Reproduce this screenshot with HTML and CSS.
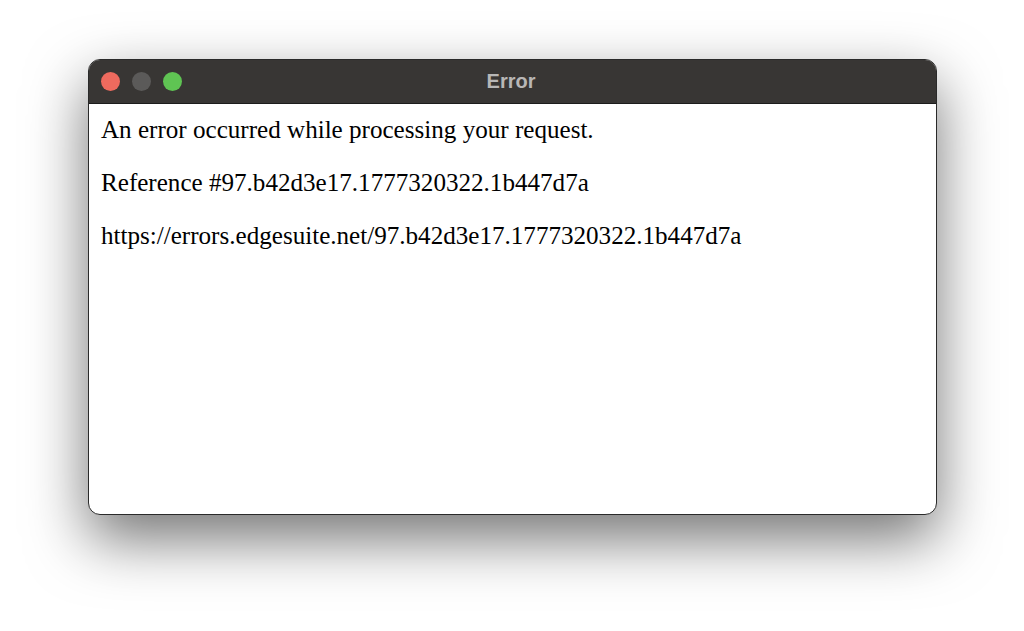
FILE: index.html
```html
<!DOCTYPE html>
<html lang="en">
<head>
    <meta charset="UTF-8">
    <meta name="viewport" content="width=device-width, initial-scale=1.0">
    <title>Error</title>
    <link rel="stylesheet" href="styles.css">
</head>
<body>
    <div class="window">
        <div class="titlebar">
            <div class="lights">
                <span class="light close"></span>
                <span class="light minimize"></span>
                <span class="light zoom"></span>
            </div>
            <div class="title">Error</div>
        </div>
        <div class="content">
            <p>An error occurred while processing your request.</p>
            <p>Reference #97.b42d3e17.1777320322.1b447d7a</p>
            <p>https://errors.edgesuite.net/97.b42d3e17.1777320322.1b447d7a</p>
        </div>
    </div>
</body>
</html>
```

FILE: styles.css
```css
body {
    margin: 0;
    padding: 59px 0 0 88px;
    background-color: #ffffff;
    height: 631px;
    box-sizing: border-box;
    overflow: hidden;
}
.window {
    width: 849px;
    height: 456px;
    box-sizing: border-box;
    border: 1px solid #2a2a2a;
    border-radius: 12px;
    background-color: #ffffff;
    box-shadow: 0 24px 60px rgba(0,0,0,0.55);
    overflow: hidden;
    display: flex;
    flex-direction: column;
}
.titlebar {
    position: relative;
    height: 44px;
    box-sizing: border-box;
    background-color: #383634;
    border-bottom: 1px solid #1c1c1c;
    display: flex;
    align-items: center;
    justify-content: center;
}
.lights {
    position: absolute;
    left: 12px;
    top: 12px;
    display: flex;
    gap: 12px;
}
.light {
    width: 19px;
    height: 19px;
    border-radius: 50%;
}
.close {
    background-color: #ee6a5e;
}
.minimize {
    background-color: #5b5a59;
}
.zoom {
    background-color: #5fc453;
}
.title {
    font-family: "Liberation Sans", Arial, sans-serif;
    font-weight: bold;
    font-size: 20px;
    color: #b8b7b6;
    margin-right: 3px;
}
.content {
    padding: 11px 12px;
    font-family: "Liberation Serif", "Times New Roman", serif;
    font-size: 25.1px;
    color: #000000;
}
.content p {
    margin: 0 0 24px;
    line-height: 29px;
}
```
